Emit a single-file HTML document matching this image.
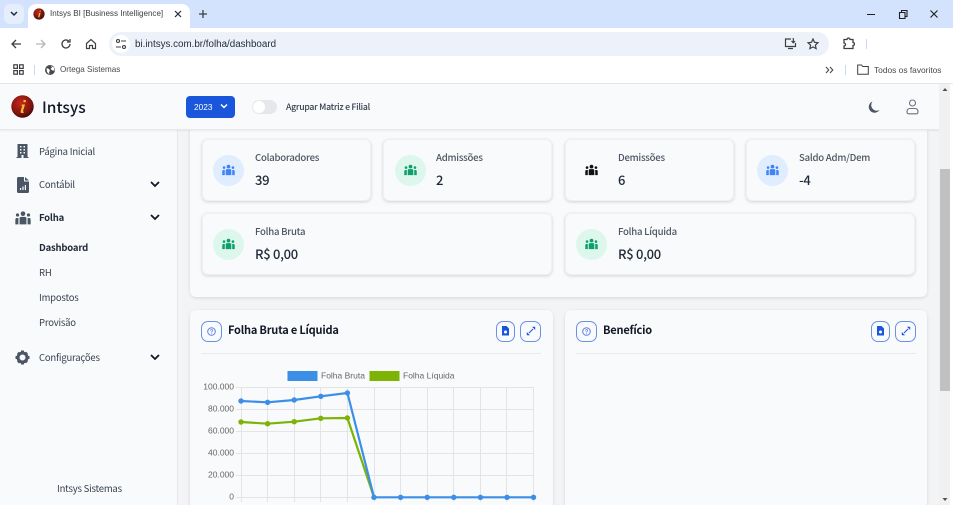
<!DOCTYPE html>
<html lang="pt-BR"><head><meta charset="utf-8"><title>Intsys BI</title>
<style>
html,body{margin:0;padding:0;background:#fff}
#r{position:relative;width:953px;height:506px;overflow:hidden;background:#fff;font-family:"Noto Sans CJK JP","Liberation Sans",sans-serif;color:#374151}
#r div,#r svg,#r span{position:absolute;box-sizing:border-box}
.t{white-space:nowrap;line-height:1}
.card{background:#f9fafb;border:1px solid #eef0f2;border-radius:6px;box-shadow:0 1px 3px rgba(0,0,0,.16)}
.panel{background:#f9fafb;border-radius:6px;box-shadow:0 1px 3px rgba(0,0,0,.12)}
.circ{width:31px;height:31px;border-radius:50%}
.lab{font-size:9.6px;letter-spacing:-.25px;color:#4b5563;font-weight:500}
.val{font-size:13px;letter-spacing:-.3px;color:#1f2937;font-weight:500}
.nav{font-size:9.5px;letter-spacing:-.2px;color:#374151;left:39px}
.btn{border:1px solid #6c8fe8;border-radius:7px;height:21px;background:#f9fafb}
.ttl{font-size:11px;letter-spacing:-.2px;font-weight:700;color:#111827}
</style></head><body><div id="r">

<!-- browser chrome -->
<div style="left:0;top:0;width:953px;height:28px;background:#d3e3fd"></div>
<div style="left:4px;top:4px;width:20px;height:20px;background:#e6eefc;border-radius:6px"></div>
<svg style="left:9px;top:10px" width="10" height="8" viewBox="0 0 10 8"><path d="M2 2l3 3 3-3" fill="none" stroke="#1f2937" stroke-width="1.5"/></svg>
<div style="left:28px;top:4px;width:162px;height:26px;background:#fff;border-radius:8px 8px 0 0"></div>
<svg style="left:33px;top:8px" width="12" height="12" viewBox="0 0 12 12"><defs><radialGradient id="g" cx=".4" cy=".35" r=".7"><stop offset="0" stop-color="#c9261b"/><stop offset="1" stop-color="#3c0b08"/></radialGradient></defs><circle cx="6" cy="6" r="5.6" fill="url(#g)"/><path d="M6.6 2.6h1.2v1.2H6.6zM6 5h1.5L6.4 9.4H5.2z" fill="#f1c232"/></svg>
<div class="t" style="left:50px;top:10px;font-size:8.05px;color:#3c4043;font-family:'Liberation Sans',sans-serif">Intsys BI [Business Intelligence]</div>
<svg style="left:174px;top:10px" width="8" height="8" viewBox="0 0 8 8"><path d="M1 1l6 6M7 1L1 7" stroke="#1f2937" stroke-width="1.2"/></svg>
<svg style="left:198px;top:9px" width="10" height="10" viewBox="0 0 10 10"><path d="M5 1v8M1 5h8" stroke="#3c4043" stroke-width="1.3"/></svg>
<svg style="left:866px;top:8px" width="80" height="12" viewBox="0 0 80 12"><path d="M1 6.5h8" stroke="#1f1f1f"/><path d="M33.5 4.5h5.5v6h-5.500zM35.500 4.500v-2h5.500v6h-2" fill="none" stroke="#1f1f1f" stroke-width="1.100"/><path d="M64.500 2.500l7 7M71.500 2.500l-7 7" stroke="#1f1f1f" stroke-width="1.100"/></svg>

<div style="left:0;top:28px;width:953px;height:56px;background:#fff;border-radius:8px 8px 0 0"></div>
<svg style="left:10px;top:38px" width="12" height="12" viewBox="0 0 12 12"><path d="M11 6H2M6 2L2 6l4 4" fill="none" stroke="#3c4043" stroke-width="1.300"/></svg>
<svg style="left:35px;top:38px" width="12" height="12" viewBox="0 0 12 12"><path d="M1 6h9M6 2l4 4-4 4" fill="none" stroke="#b3b6ba" stroke-width="1.300"/></svg>
<svg style="left:60px;top:38px" width="12" height="12" viewBox="0 0 12 12"><path d="M10 6a4 4 0 1 1-1.200-2.900M10 1v3H7" fill="none" stroke="#3c4043" stroke-width="1.300"/></svg>
<svg style="left:85px;top:38px" width="12" height="12" viewBox="0 0 12 12"><path d="M1.500 5.500L6 1.500l4.500 4V10.500H7.500V7.500h-3v3h-3z" fill="none" stroke="#3c4043" stroke-width="1.200"/></svg>
<div style="left:109px;top:32px;width:720px;height:24px;background:#edf2fa;border-radius:12px"></div>
<div style="left:112px;top:35px;width:18px;height:18px;background:#fff;border-radius:50%"></div>
<svg style="left:115px;top:38px" width="12" height="12" viewBox="0 0 12 12"><g fill="none" stroke="#3c4043" stroke-width="1.100"><circle cx="3" cy="3" r="1.500"/><path d="M6 3h5M1 9h5"/><circle cx="9" cy="9" r="1.500"/></g></svg>
<div class="t" style="left:135px;top:40px;font-size:9.8px;color:#1f2937;font-family:'Liberation Sans',sans-serif">bi.intsys.com.br/folha/dashboard</div>
<svg style="left:784px;top:37px" width="13" height="13" viewBox="0 0 13 13"><path d="M7 2H1.500v7.500h10V6M4 11.500h5M9.300 1v4.500M7.500 4l1.800 1.800L11.100 4" fill="none" stroke="#3c4043" stroke-width="1.200"/></svg>
<svg style="left:807px;top:38px" width="12" height="12" viewBox="0 0 12 12"><path d="M6 1l1.500 3.300 3.500.4-2.600 2.400.7 3.500L6 8.900l-3.100 1.700.7-3.500L1 4.700l3.500-.4z" fill="none" stroke="#3c4043" stroke-width="1.200"/></svg>
<svg style="left:842px;top:37px" width="13" height="13" viewBox="0 0 13 13"><path d="M2 3h3a1.500 1.500 0 0 1 3 0h3v3a1.500 1.500 0 0 1 0 3v3H2V9.500a1.500 1.500 0 0 0 0-3z" fill="none" stroke="#3c4043" stroke-width="1.300" transform="translate(0 -.5)"/></svg>
<div style="left:866px;top:39px;width:1px;height:10px;background:#c7d9f5"></div>

<svg style="left:13px;top:64px" width="11" height="11" viewBox="0 0 11 11"><g fill="none" stroke="#3c4043" stroke-width="1.200"><rect x=".8" y=".8" width="3.600" height="3.600"/><rect x="6.600" y=".8" width="3.600" height="3.600"/><rect x=".8" y="6.600" width="3.600" height="3.600"/><rect x="6.600" y="6.600" width="3.600" height="3.600"/></g></svg>
<div style="left:34px;top:65px;width:1px;height:10px;background:#c7d9f5"></div>
<svg style="left:45px;top:65px" width="10" height="10" viewBox="0 0 10 10"><circle cx="5" cy="5" r="5" fill="#45494e"/><path d="M1.500 3l2.500 1 1 2-1 1 .5 2.500L2 7zM5.500 .8L7 2.500 5.500 4l2 1.500 2 0L9 2.500z" fill="#fff"/></svg>
<div class="t" style="left:60px;top:66px;font-size:8.1px;color:#45494e;font-family:'Liberation Sans',sans-serif">Ortega Sistemas</div>
<svg style="left:825px;top:66px" width="9" height="8" viewBox="0 0 9 8"><path d="M1 1l2.800 3L1 7M5 1l2.800 3L5 7" fill="none" stroke="#3c4043" stroke-width="1"/></svg>
<div style="left:845px;top:65px;width:1px;height:10px;background:#c7d9f5"></div>
<svg style="left:857px;top:64px" width="12" height="11" viewBox="0 0 12 11"><path d="M.7 1h3.800l1.200 1.500h5.600v7.800H.7z" fill="none" stroke="#3c4043"/></svg>
<div class="t" style="left:874px;top:66px;font-size:8.4px;color:#45494e;font-family:'Liberation Sans',sans-serif">Todos os favoritos</div>
<div style="left:0;top:83px;width:953px;height:1px;background:#e6e6e6"></div>

<!-- page -->
<div style="left:0;top:84px;width:950px;height:421px;background:#f3f4f6"></div>

<!-- panel 1 -->
<div class="panel" style="left:190px;top:110px;width:737px;height:187px"></div>
<div class="card" style="left:202px;top:139px;width:169px;height:62px"></div>
<div class="card" style="left:383px;top:139px;width:169px;height:62px"></div>
<div class="card" style="left:565px;top:139px;width:169px;height:62px"></div>
<div class="card" style="left:746px;top:139px;width:169px;height:62px"></div>
<div class="card" style="left:202px;top:213px;width:350px;height:62px"></div>
<div class="card" style="left:565px;top:213px;width:350px;height:62px"></div>

<div class="circ" style="left:213px;top:155px;background:#e0edff"></div>
<div class="circ" style="left:395px;top:155px;background:#def7ec"></div>
<div class="circ" style="left:757px;top:155px;background:#e0edff"></div>
<div class="circ" style="left:213px;top:229px;background:#def7ec"></div>
<div class="circ" style="left:576px;top:229px;background:#def7ec"></div>

<svg width="0" height="0" style="left:0;top:0"><defs><symbol id="u" viewBox="0 0 14 12"><circle cx="7" cy="2.300" r="2"/><circle cx="2.200" cy="3.400" r="1.400"/><circle cx="11.800" cy="3.400" r="1.400"/><path d="M4 6.300Q4 5 5.300 5h3.400Q10 5 10 6.300V11.500H4zM.3 7.500Q.3 6 1.500 6H3v5.500H.3zM13.700 7.500Q13.700 6 12.500 6H11v5.500h2.700z"/></symbol></defs></svg>
<svg style="left:222px;top:164px;fill:#3f83f8" width="13" height="12"><use href="#u"/></svg>
<svg style="left:403.500px;top:164px;fill:#0e9f6e" width="13" height="12"><use href="#u"/></svg>
<svg style="left:585px;top:164px;fill:#111" width="13" height="12"><use href="#u"/></svg>
<svg style="left:766px;top:164px;fill:#3f83f8" width="13" height="12"><use href="#u"/></svg>
<svg style="left:222px;top:238px;fill:#0e9f6e" width="13" height="12"><use href="#u"/></svg>
<svg style="left:585px;top:238px;fill:#0e9f6e" width="13" height="12"><use href="#u"/></svg>

<div class="t lab" style="left:255px;top:153px">Colaboradores</div>
<div class="t val" style="left:255px;top:173px">39</div>
<div class="t lab" style="left:436px;top:153px">Admissões</div>
<div class="t val" style="left:436px;top:173px">2</div>
<div class="t lab" style="left:618px;top:153px">Demissões</div>
<div class="t val" style="left:618px;top:173px">6</div>
<div class="t lab" style="left:799px;top:153px">Saldo Adm/Dem</div>
<div class="t val" style="left:799px;top:173px">-4</div>
<div class="t lab" style="left:255px;top:227px">Folha Bruta</div>
<div class="t val" style="left:255px;top:247px">R$ 0,00</div>
<div class="t lab" style="left:618px;top:227px">Folha Líquida</div>
<div class="t val" style="left:618px;top:247px">R$ 0,00</div>

<!-- chart panels -->
<div class="panel" style="left:190px;top:310px;width:363px;height:220px"></div>
<div class="panel" style="left:565px;top:310px;width:362px;height:220px"></div>
<div style="left:201px;top:353px;width:340px;height:1px;background:#e8eaed"></div>
<div style="left:576px;top:353px;width:340px;height:1px;background:#e8eaed"></div>

<div class="btn" style="left:201px;top:321px;width:21px"></div>
<svg style="left:206px;top:326px" width="11" height="11" viewBox="0 0 11 11"><circle cx="5.500" cy="5.500" r="3.800" fill="none" stroke="#5b7ee5"/><path d="M4.400 4.600a1.100 1.100 0 1 1 1.600 1l-.5.500v.4M5.500 7.500v.6" fill="none" stroke="#5b7ee5" stroke-width=".8"/></svg>
<div class="t ttl" style="left:228px;top:325px">Folha Bruta e Líquida</div>
<div class="btn" style="left:496px;top:321px;width:19px"></div>
<div class="btn" style="left:520px;top:321px;width:21px"></div>
<svg style="left:502px;top:326px" width="7" height="10" viewBox="0 0 7 10"><path d="M0 0h4.500L7 2.500V9.500H0z" fill="#1a56db"/><circle cx="3.500" cy="6" r="1.500" fill="#fff"/></svg>
<svg style="left:526px;top:326px" width="10" height="10" viewBox="0 0 10 10"><path d="M6 .8h3.200V4zM.8 6v3.200H4z" fill="#1a56db"/><path d="M3 7l4-4" stroke="#1a56db" stroke-width="1.100"/></svg>

<div class="btn" style="left:576px;top:321px;width:21px"></div>
<svg style="left:581px;top:326px" width="11" height="11" viewBox="0 0 11 11"><circle cx="5.500" cy="5.500" r="3.800" fill="none" stroke="#5b7ee5"/><path d="M4.400 4.600a1.100 1.100 0 1 1 1.600 1l-.5.500v.4M5.500 7.500v.6" fill="none" stroke="#5b7ee5" stroke-width=".8"/></svg>
<div class="t ttl" style="left:603px;top:325px">Benefício</div>
<div class="btn" style="left:871px;top:321px;width:19px"></div>
<div class="btn" style="left:895px;top:321px;width:21px"></div>
<svg style="left:877px;top:326px" width="7" height="10" viewBox="0 0 7 10"><path d="M0 0h4.500L7 2.500V9.500H0z" fill="#1a56db"/><circle cx="3.500" cy="6" r="1.500" fill="#fff"/></svg>
<svg style="left:901px;top:326px" width="10" height="10" viewBox="0 0 10 10"><path d="M6 .8h3.200V4zM.8 6v3.200H4z" fill="#1a56db"/><path d="M3 7l4-4" stroke="#1a56db" stroke-width="1.100"/></svg>

<!-- chart -->
<svg style="left:190px;top:360px" width="363" height="145" viewBox="190 360 363 145">
<g stroke="#e4e4e4" stroke-width="1" fill="none">
<path d="M236 387.500H533.500M236 409.500H533.500M236 431.500H533.500M236 453.500H533.500M236 475.500H533.500M236 497.500H533.500"/>
<path d="M241.500 387V502M267.500 387V502M294.500 387V502M320.500 387V502M347.500 387V502M374.500 387V502M400.500 387V502M427.500 387V502M453.500 387V502M480.500 387V502M506.500 387V502M533.500 387V502"/>
</g>
<g font-family="Liberation Sans" font-size="8.500" fill="#666">
<rect x="287.500" y="371" width="30" height="10" fill="#3b8fe6"/>
<text x="321" y="378.500">Folha Bruta</text>
<rect x="369.500" y="371" width="30" height="10" fill="#7cb305"/>
<text x="403" y="378.500">Folha Líquida</text>
<g text-anchor="end">
<text x="234" y="389.500">100.000</text><text x="234" y="411.500">80.000</text><text x="234" y="433.500">60.000</text><text x="234" y="455.500">40.000</text><text x="234" y="477.500">20.000</text><text x="234" y="499.500">0</text>
</g></g>
<g fill="#7cb305"><polyline fill="none" stroke="#7cb305" stroke-width="2.200" points="241,422 267.600,423.700 294.200,421.700 320.800,418.300 347.400,418 374,497.300"/>
<circle cx="241" cy="422" r="2.700"/><circle cx="267.600" cy="423.700" r="2.700"/><circle cx="294.200" cy="421.700" r="2.700"/><circle cx="320.800" cy="418.300" r="2.700"/><circle cx="347.400" cy="418" r="2.700"/></g>
<g fill="#3b8fe6"><polyline fill="none" stroke="#3b8fe6" stroke-width="2.200" points="241,401 267.600,402.300 294.200,400 320.800,396.300 347.400,393 374,497.300 400.600,497.300 427.200,497.300 453.800,497.300 480.400,497.300 507,497.300 533.500,497.300"/>
<circle cx="241" cy="401" r="2.700"/><circle cx="267.600" cy="402.300" r="2.700"/><circle cx="294.200" cy="400" r="2.700"/><circle cx="320.800" cy="396.300" r="2.700"/><circle cx="347.400" cy="393" r="2.700"/><circle cx="374" cy="497.300" r="2.700"/><circle cx="400.600" cy="497.300" r="2.700"/><circle cx="427.200" cy="497.300" r="2.700"/><circle cx="453.800" cy="497.300" r="2.700"/><circle cx="480.400" cy="497.300" r="2.700"/><circle cx="507" cy="497.300" r="2.700"/><circle cx="533.500" cy="497.300" r="2.700"/></g>
</svg>

<!-- sidebar -->
<div style="left:0;top:129px;width:178px;height:376px;background:#f9fafb;border-right:1px solid #e5e7eb"></div>
<svg style="left:16px;top:144px" width="13" height="14" viewBox="0 0 13 14"><path d="M1.500 0h10v13h1v1H.500v-1h1z" fill="#4b5563"/><path d="M4 2h1.500v1.500H4zM7.500 2H9v1.500H7.500zM4 5h1.500v1.500H4zM7.500 5H9v1.500H7.500zM4 8h1.500v1.500H4zM7.500 8H9v1.500H7.500zM5.500 11h2v3h-2z" fill="#f9fafb"/></svg>
<svg style="left:17px;top:177px" width="12" height="16" viewBox="0 0 12 16"><path d="M0 1.500Q0 0 1.500 0H7v4.500h5V14.500Q12 16 10.500 16h-9Q0 16 0 14.500zM8 0l4 3.500H8z" fill="#4b5563"/><path d="M3 13h1.200v-2H3zM5.400 13h1.200V9.500H5.400zM7.800 13H9V8H7.800z" fill="#f9fafb"/></svg>
<svg style="left:15px;top:211px" width="16" height="14" viewBox="0 0 14 12" preserveAspectRatio="none" fill="#4b5563"><use href="#u"/></svg>
<svg style="left:15px;top:350px" width="15" height="15" viewBox="0 0 15 15"><circle cx="7.500" cy="7.500" r="4.500" fill="none" stroke="#4b5563" stroke-width="3"/><path d="M6 .5h3v2.500H6zM6 12h3v2.500H6zM.5 6H3v3H.5zM12 6h2.500v3H12zM2 3.500L4 1.700l2 2-2 2zM11 1.700l2 1.800-2 2-2-2zM2 11.500l2-2 2 2-2 2zM11 13.300l-2-2 2-2 2 2z" fill="#4b5563"/></svg>
<div class="t nav" style="top:146.500px">Página Inicial</div>
<div class="t nav" style="top:180px">Contábil</div>
<div class="t nav" style="top:213px;font-weight:700;color:#1f2937">Folha</div>
<div class="t nav" style="top:242.500px;font-weight:700;color:#1f2937">Dashboard</div>
<div class="t nav" style="top:267.500px">RH</div>
<div class="t nav" style="top:292.500px">Impostos</div>
<div class="t nav" style="top:317.500px">Provisão</div>
<div class="t nav" style="top:352.500px">Configurações</div>
<div class="t nav" style="top:484px;left:57px">Intsys Sistemas</div>
<svg style="left:150px;top:181px" width="10" height="7" viewBox="0 0 10 7"><path d="M1 1l4 4 4-4" fill="none" stroke="#111827" stroke-width="1.800"/></svg>
<svg style="left:150px;top:214px" width="10" height="7" viewBox="0 0 10 7"><path d="M1 1l4 4 4-4" fill="none" stroke="#111827" stroke-width="1.800"/></svg>
<svg style="left:150px;top:354px" width="10" height="7" viewBox="0 0 10 7"><path d="M1 1l4 4 4-4" fill="none" stroke="#111827" stroke-width="1.800"/></svg>

<!-- header -->
<div style="left:0;top:84px;width:939px;height:45.500px;background:#f9fafb;border-bottom:1px solid #e5e7eb;box-shadow:0 1px 2px rgba(0,0,0,.06)"></div>
<svg style="left:11px;top:95px" width="23" height="23" viewBox="0 0 23 23"><defs><radialGradient id="g2" cx=".42" cy=".35" r=".7"><stop offset="0" stop-color="#c9261b"/><stop offset=".7" stop-color="#7d140e"/><stop offset="1" stop-color="#2e0a07"/></radialGradient></defs><circle cx="11.500" cy="11.500" r="11.200" fill="url(#g2)"/><path d="M12.500 5h2.300v2.300h-2.300zM11 9.500h3l-2 6.500q-.2 1 1 .6l-.3 1.100q-3.700 1-3-1.600l1.600-5.400-1 .1.200-.8z" fill="#f1c232"/></svg>
<div class="t" style="left:42px;top:100px;font-size:15.500px;font-weight:500;color:#111827">Intsys</div>
<div style="left:186px;top:96px;width:49px;height:22px;background:#1a56db;border-radius:4px"></div>
<div class="t" style="left:194px;top:103px;font-size:8.300px;color:#fff;font-family:'Liberation Sans',sans-serif">2023</div>
<svg style="left:219px;top:103px" width="10" height="7" viewBox="0 0 10 7"><path d="M2 1.500l3 3 3-3" fill="none" stroke="#fff" stroke-width="1.500"/></svg>
<div style="left:252px;top:100px;width:25px;height:14px;background:#e5e7eb;border-radius:7px"></div>
<div style="left:253px;top:101px;width:12px;height:12px;background:#fff;border-radius:50%"></div>
<div class="t" style="left:286px;top:103px;font-size:8.700px;letter-spacing:-.26px;color:#374151;font-weight:500">Agrupar Matriz e Filial</div>
<svg style="left:868px;top:101px" width="12" height="12" viewBox="0 0 12 12"><path d="M4.500 .5A5.600 5.600 0 0 0 11.500 9 5.800 5.800 0 1 1 4.500 .5z" fill="#4b5563"/></svg>
<svg style="left:906px;top:99px" width="13" height="16" viewBox="0 0 13 16"><circle cx="6.500" cy="4" r="3" fill="none" stroke="#6b7280" stroke-width="1.100"/><path d="M1 13q0-3.500 3-3.500h5q3 0 3 3.500 0 1.800-2 1.800H3Q1 14.800 1 13z" fill="none" stroke="#6b7280" stroke-width="1.100"/></svg>

<!-- scrollbar -->
<div style="left:939px;top:84px;width:11px;height:421px;background:#f1f1f1"></div>
<div style="left:940px;top:169px;width:10px;height:222px;background:#c1c1c1"></div>
<svg style="left:942px;top:87px" width="6" height="5" viewBox="0 0 6 5"><path d="M3 1l2.500 3h-5z" fill="#505050"/></svg>
<svg style="left:942px;top:497px" width="6" height="5" viewBox="0 0 6 5"><path d="M3 4L.5 1h5z" fill="#505050"/></svg>
<div style="left:0;top:505px;width:953px;height:1px;background:#fff"></div>
<div style="left:950px;top:84px;width:3px;height:422px;background:#fff"></div>
</div></body></html>
